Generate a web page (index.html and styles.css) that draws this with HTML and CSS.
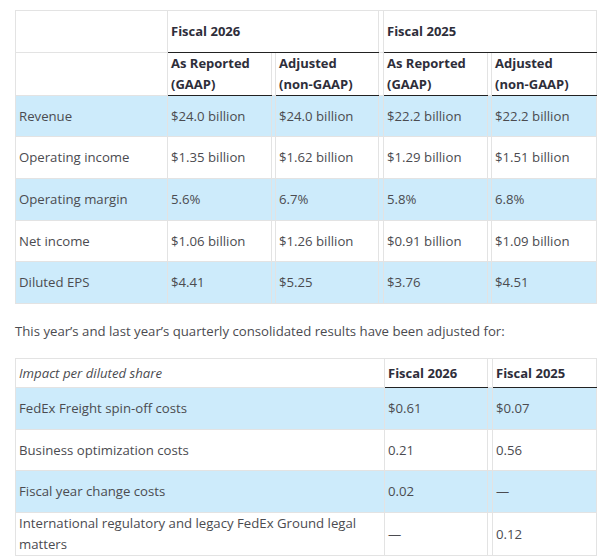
FILE: index.html
```html
<!DOCTYPE html>
<html>
<head>
<meta charset="utf-8">
<link rel="stylesheet" href="styles.css">
</head>
<body>
<div class="page">
  <table class="results">
    <colgroup>
      <col class="c-label1"><col class="c-a"><col class="c-sp"><col class="c-b"><col class="c-sp5"><col class="c-a"><col class="c-sp"><col class="c-last">
    </colgroup>
    <thead>
      <tr class="h1">
        <th class="blank"></th>
        <th class="grp" colspan="3">Fiscal 2026</th>
        <th class="sp"></th>
        <th class="grp" colspan="3">Fiscal 2025</th>
      </tr>
      <tr class="h2">
        <th class="blank"></th>
        <th class="sub">As Reported<br>(GAAP)</th>
        <th class="sp"></th>
        <th class="sub">Adjusted<br>(non-GAAP)</th>
        <th class="sp"></th>
        <th class="sub">As Reported<br>(GAAP)</th>
        <th class="sp"></th>
        <th class="sub">Adjusted<br>(non-GAAP)</th>
      </tr>
    </thead>
    <tbody>
      <tr class="blue r41">
        <td>Revenue</td><td>$24.0 billion</td><td class="sp"></td><td>$24.0 billion</td><td class="sp"></td><td>$22.2 billion</td><td class="sp"></td><td>$22.2 billion</td>
      </tr>
      <tr class="r42">
        <td>Operating income</td><td>$1.35 billion</td><td class="sp"></td><td>$1.62 billion</td><td class="sp"></td><td>$1.29 billion</td><td class="sp"></td><td>$1.51 billion</td>
      </tr>
      <tr class="blue r42">
        <td>Operating margin</td><td>5.6%</td><td class="sp"></td><td>6.7%</td><td class="sp"></td><td>5.8%</td><td class="sp"></td><td>6.8%</td>
      </tr>
      <tr class="r41">
        <td>Net income</td><td>$1.06 billion</td><td class="sp"></td><td>$1.26 billion</td><td class="sp"></td><td>$0.91 billion</td><td class="sp"></td><td>$1.09 billion</td>
      </tr>
      <tr class="blue r42">
        <td>Diluted EPS</td><td>$4.41</td><td class="sp"></td><td>$5.25</td><td class="sp"></td><td>$3.76</td><td class="sp"></td><td>$4.51</td>
      </tr>
    </tbody>
  </table>

  <p class="note">This year’s and last year’s quarterly consolidated results have been adjusted for:</p>

  <table class="impact">
    <colgroup>
      <col class="c-label2"><col class="c-b"><col class="c-sp5"><col class="c-c">
    </colgroup>
    <thead>
      <tr class="h3">
        <th class="lead">Impact per diluted share</th>
        <th class="sub">Fiscal 2026</th>
        <th class="sp"></th>
        <th class="sub">Fiscal 2025</th>
      </tr>
    </thead>
    <tbody>
      <tr class="blue r42">
        <td>FedEx Freight spin-off costs</td><td>$0.61</td><td class="sp"></td><td>$0.07</td>
      </tr>
      <tr class="r41">
        <td>Business optimization costs</td><td>0.21</td><td class="sp"></td><td>0.56</td>
      </tr>
      <tr class="blue r42">
        <td>Fiscal year change costs</td><td>0.02</td><td class="sp"></td><td>—</td>
      </tr>
      <tr class="r43">
        <td>International regulatory and legacy FedEx Ground legal matters</td><td>—</td><td class="sp"></td><td>0.12</td>
      </tr>
    </tbody>
  </table>
</div>
</body>
</html>
```

FILE: styles.css
```css
html, body {
  margin: 0;
  padding: 0;
  background: #ffffff;
}

.page {
  padding: 10px 0 0 15px;
  width: 584px;
  font-family: "Open Sans", "Liberation Sans", sans-serif;
  color: #4b4b50;
  font-size: 13.2px;
}

table {
  border-collapse: collapse;
  table-layout: fixed;
  width: 581px;
  border: 1px solid #e3e3e3;
}

.c-label1 { width: 152px; }
.c-label2 { width: 369px; }
.c-a { width: 104px; }
.c-b { width: 103px; }
.c-c { width: 104px; }
.c-last { width: 105px; }
.c-sp { width: 4px; }
.c-sp5 { width: 5px; }

th, td {
  border: 1px solid #e3e3e3;
  padding: 0 3px;
  text-align: left;
  vertical-align: middle;
  line-height: 21px;
}

th {
  font-weight: 700;
  color: #2e2e3a;
  font-size: 13px;
}

td.sp, th.sp {
  padding: 0;
}

th.grp, th.sub {
  border-bottom: 1px solid #222222;
}

th.lead {
  font-weight: 400;
  font-style: italic;
  color: #4b4b50;
  font-size: 13.2px;
}

.h1 > * { height: 41px; }
.h2 > * { height: 42px; }
.h3 > * { height: 28px; }
.r41 > * { height: 40px; }
.r42 > * { height: 41px; }
.r43 > * { height: 42px; }

tr.blue > td {
  background: #cdebfb;
}

.note {
  margin: 17px 0 16px 0;
  line-height: 21px;
  font-size: 13.2px;
}
```
